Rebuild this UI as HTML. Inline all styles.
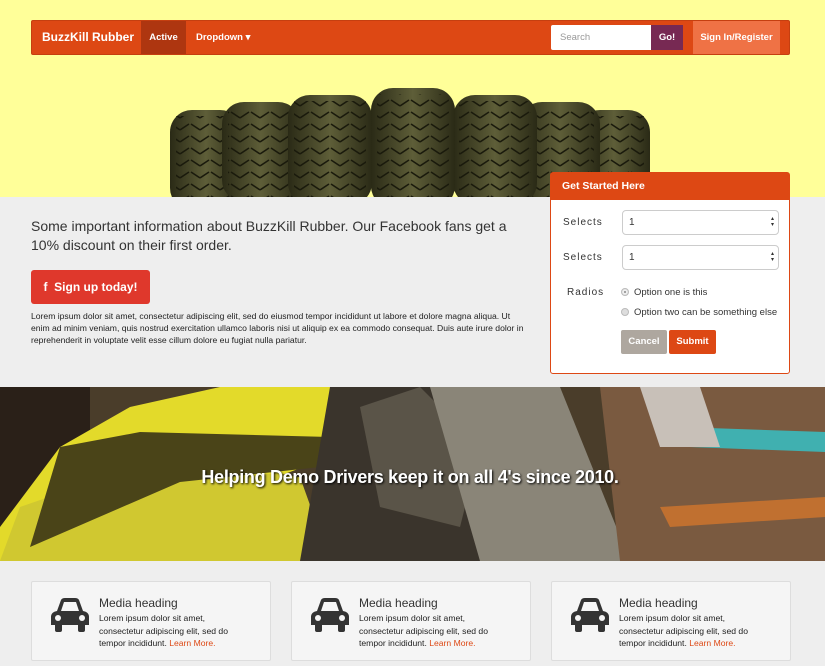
<!DOCTYPE html>
<html><head><meta charset="utf-8"><style>
*{margin:0;padding:0;box-sizing:border-box}
body{width:825px;height:666px;overflow:hidden;font-family:"Liberation Sans",sans-serif;background:#eee;position:relative;color:#333}
.abs{position:absolute}
.hero{left:0;top:0;width:825px;height:197px;background:#ffff99;overflow:hidden}
.nav{left:31px;top:20px;width:759px;height:35px;background:#dd4814;border:1px solid #c53f10;border-radius:2px;color:#fff;font-weight:bold}
.nav span{position:absolute;top:0;line-height:33px}
.mid{left:0;top:197px;width:825px;height:190px;background:#eee}
.panel{left:550px;top:172px;width:240px;height:202px;background:#fff;border:1px solid #dd4814;border-radius:3px}
.ph{height:27px;background:#dd4814;color:#fff;font-size:10.5px;font-weight:bold;padding-left:11px;line-height:27px}
.lbl{position:absolute;font-size:10px;letter-spacing:1px;color:#333}
.sel{position:absolute;left:71px;width:157px;height:25px;border:1px solid #ccc;border-radius:4px;font-size:10px;padding-left:6px;line-height:23px}
.sel:after{content:"\25B4\A\25BE";white-space:pre;position:absolute;right:4px;top:5px;font-size:6px;line-height:6px}
.rad{position:absolute;left:70px;font-size:9.5px}
.rad i{display:inline-block;width:8px;height:8px;border-radius:50%;background:#ddd;border:1px solid #bbb;margin-right:5px;vertical-align:-1px}
.card{position:absolute;top:581px;width:240px;height:80px;background:#f5f5f5;border:1px solid #ddd;border-radius:2px}
.card h4{position:absolute;left:67px;top:14px;font-size:12px;font-weight:normal;color:#333}
.card p{position:absolute;left:67px;top:30px;font-size:8.6px;line-height:12.5px;color:#222;width:150px}
.card p a{color:#dd4814}
.card svg{position:absolute;left:16px;top:15px}
</style></head><body>
<div class="abs hero">
<svg width="825" height="197" style="position:absolute;left:0;top:0">
<defs>
<linearGradient id="tg" x1="0" x2="1" y1="0" y2="0"><stop offset="0" stop-color="#2a2a16"/><stop offset=".5" stop-color="#5e5e38"/><stop offset="1" stop-color="#2a2a16"/></linearGradient>
<pattern id="tr" width="20" height="12" patternUnits="userSpaceOnUse"><path d="M0 10 L9 4 M11 4 L20 10" stroke="#1a1a0c" stroke-width="1.6" fill="none"/></pattern>
</defs>
<g>
<rect x="170" y="110" width="72" height="100" rx="22" fill="url(#tg)"/><rect x="176" y="116" width="60" height="90" fill="url(#tr)"/>
<rect x="578" y="110" width="72" height="100" rx="22" fill="url(#tg)"/><rect x="584" y="116" width="60" height="90" fill="url(#tr)"/>
<rect x="222" y="102" width="78" height="100" rx="22" fill="url(#tg)"/><rect x="228" y="108" width="66" height="90" fill="url(#tr)"/>
<rect x="520" y="102" width="80" height="100" rx="22" fill="url(#tg)"/><rect x="526" y="108" width="68" height="90" fill="url(#tr)"/>
<rect x="288" y="95" width="84" height="110" rx="22" fill="url(#tg)"/><rect x="294" y="101" width="72" height="100" fill="url(#tr)"/>
<rect x="453" y="95" width="84" height="110" rx="22" fill="url(#tg)"/><rect x="459" y="101" width="72" height="100" fill="url(#tr)"/>
<rect x="371" y="88" width="84" height="120" rx="22" fill="url(#tg)"/><rect x="377" y="94" width="72" height="110" fill="url(#tr)"/>
</g>
</svg>
</div>
<div class="abs nav">
<span style="left:10px;font-size:12px">BuzzKill Rubber</span>
<span style="left:109px;width:45px;height:33px;background:#ae3610;text-align:center;font-size:9.5px">Active</span>
<span style="left:164px;font-size:9.5px">Dropdown ▾</span>
<div style="position:absolute;left:519px;top:4px;width:100px;height:25px;background:#fff;border-radius:2px 0 0 2px;color:#999;font-size:9.5px;font-weight:normal;line-height:25px;padding-left:9px">Search</div>
<div style="position:absolute;left:619px;top:4px;width:32px;height:25px;background:#772953;font-size:9.5px;line-height:25px;text-align:center">Go!</div>
<div style="position:absolute;left:661px;top:0;width:87px;height:33px;background:#ef7245;font-size:9.5px;line-height:33px;text-align:center">Sign In/Register</div>
</div>
<div class="abs mid">
<div style="position:absolute;left:31px;top:20px;width:500px;font-size:14px;line-height:19px;color:#333">Some important information about BuzzKill Rubber. Our Facebook fans get a 10% discount on their first order.</div>
<div style="position:absolute;left:31px;top:73px;width:119px;height:34px;background:#df382c;border-radius:3px;color:#fff;font-weight:bold;font-size:12px;line-height:34px;text-align:center">f&nbsp;&nbsp;Sign up today!</div>
<div style="position:absolute;left:31px;top:113px;width:495px;font-size:8.6px;line-height:12px;color:#222">Lorem ipsum dolor sit amet, consectetur adipiscing elit, sed do eiusmod tempor incididunt ut labore et dolore magna aliqua. Ut enim ad minim veniam, quis nostrud exercitation ullamco laboris nisi ut aliquip ex ea commodo consequat. Duis aute irure dolor in reprehenderit in voluptate velit esse cillum dolore eu fugiat nulla pariatur.</div>
</div>
<div class="abs panel">
<div class="ph">Get Started Here</div>
<div class="lbl" style="left:12px;top:44px">Selects</div><div class="sel" style="top:37px">1</div>
<div class="lbl" style="left:12px;top:79px">Selects</div><div class="sel" style="top:72px">1</div>
<div class="lbl" style="left:16px;top:114px">Radios</div>
<div class="rad" style="top:114px"><i style="background:#eee;box-shadow:inset 0 0 0 2px #eee,inset 0 0 0 4px #888"></i>Option one is this</div>
<div class="rad" style="top:134px"><i></i>Option two can be something else</div>
<div style="position:absolute;left:70px;top:157px;width:46px;height:24px;background:#aea79f;color:#fff;font-size:9.5px;font-weight:bold;line-height:24px;text-align:center;border-radius:2px">Cancel</div>
<div style="position:absolute;left:118px;top:157px;width:47px;height:24px;background:#dd4814;color:#fff;font-size:9.5px;font-weight:bold;line-height:24px;text-align:center;border-radius:2px">Submit</div>
</div>
<div class="abs" style="left:0;top:387px;width:825px;height:174px;overflow:hidden;background:#5a4a2a">
<svg width="825" height="174">
<rect width="825" height="174" fill="#4a3d2a"/>
<rect x="0" y="0" width="90" height="174" fill="#2a2018"/>
<path d="M0 174 L0 140 L60 60 L130 20 L220 0 L360 0 L330 70 L250 100 L310 174 Z" fill="#e3da2a"/>
<path d="M0 174 L20 120 L150 75 L300 90 L330 174 Z" fill="#d0c830"/>
<path d="M60 60 L140 45 L330 50 L320 80 L180 95 L30 160 Z" fill="#4a4418"/>
<path d="M330 0 L560 0 L520 174 L300 174 Z" fill="#3a342c"/>
<path d="M360 20 L420 0 L480 60 L460 140 L380 120 Z" fill="#5a5448"/>
<path d="M430 0 L560 0 L630 174 L480 174 Z" fill="#8a8578"/>
<path d="M600 0 L825 0 L825 174 L620 174 Z" fill="#7a5a40"/>
<path d="M680 40 L825 45 L825 65 L690 60 Z" fill="#40b0b0"/>
<path d="M660 120 L825 110 L825 130 L670 140 Z" fill="#c07030"/>
<path d="M640 0 L700 0 L720 60 L660 60 Z" fill="#c8c0b8"/>
</svg>
<div style="position:absolute;left:0;top:80px;width:820px;text-align:center;color:#fff;font-size:18px;font-weight:bold;text-shadow:1px 1px 2px #000;letter-spacing:-0.3px">Helping Demo Drivers keep it on all 4's since 2010.</div>
</div>
<div class="card" style="left:31px"><svg width="44" height="36" viewBox="0 0 44 36"><path d="M9 14 L13 3 Q14 1 17 1 L27 1 Q30 1 31 3 L35 14 Q41 15 41 20 L41 28 L37 28 L37 33 Q37 35 35 35 L32 35 Q30 35 30 33 L30 28 L14 28 L14 33 Q14 35 12 35 L9 35 Q7 35 7 33 L7 28 L3 28 L3 20 Q3 15 9 14 Z M13 14 L31 14 L28 5 L16 5 Z" fill="#333" fill-rule="evenodd"/><circle cx="10" cy="21" r="3" fill="#f5f5f5"/><circle cx="34" cy="21" r="3" fill="#f5f5f5"/></svg><h4>Media heading</h4><p>Lorem ipsum dolor sit amet, consectetur adipiscing elit, sed do tempor incididunt. <a>Learn More.</a></p></div>
<div class="card" style="left:291px"><svg width="44" height="36" viewBox="0 0 44 36"><path d="M9 14 L13 3 Q14 1 17 1 L27 1 Q30 1 31 3 L35 14 Q41 15 41 20 L41 28 L37 28 L37 33 Q37 35 35 35 L32 35 Q30 35 30 33 L30 28 L14 28 L14 33 Q14 35 12 35 L9 35 Q7 35 7 33 L7 28 L3 28 L3 20 Q3 15 9 14 Z M13 14 L31 14 L28 5 L16 5 Z" fill="#333" fill-rule="evenodd"/><circle cx="10" cy="21" r="3" fill="#f5f5f5"/><circle cx="34" cy="21" r="3" fill="#f5f5f5"/></svg><h4>Media heading</h4><p>Lorem ipsum dolor sit amet, consectetur adipiscing elit, sed do tempor incididunt. <a>Learn More.</a></p></div>
<div class="card" style="left:551px"><svg width="44" height="36" viewBox="0 0 44 36"><path d="M9 14 L13 3 Q14 1 17 1 L27 1 Q30 1 31 3 L35 14 Q41 15 41 20 L41 28 L37 28 L37 33 Q37 35 35 35 L32 35 Q30 35 30 33 L30 28 L14 28 L14 33 Q14 35 12 35 L9 35 Q7 35 7 33 L7 28 L3 28 L3 20 Q3 15 9 14 Z M13 14 L31 14 L28 5 L16 5 Z" fill="#333" fill-rule="evenodd"/><circle cx="10" cy="21" r="3" fill="#f5f5f5"/><circle cx="34" cy="21" r="3" fill="#f5f5f5"/></svg><h4>Media heading</h4><p>Lorem ipsum dolor sit amet, consectetur adipiscing elit, sed do tempor incididunt. <a>Learn More.</a></p></div>
</body></html>
